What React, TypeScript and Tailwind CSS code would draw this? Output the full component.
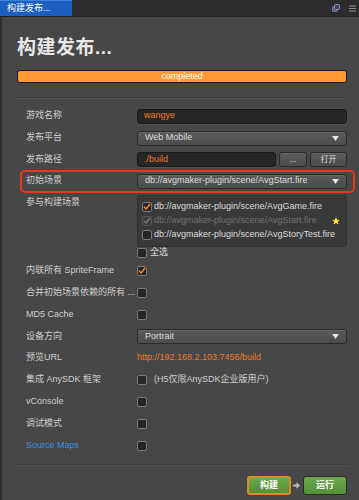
import React from "react";

const FONT = { fontFamily: '"Liberation Sans", "Noto Sans CJK SC", sans-serif' };

function Check({ checked = false, disabled = false }: { checked?: boolean; disabled?: boolean }) {
  return (
    <div
      className={
        "relative w-[10px] h-[10px] shrink-0 rounded-[2px] border " +
        (disabled ? "border-[#555] bg-[#3a3a3a]" : "border-[#7a7a7a] bg-[#262626]")
      }
    >
      {checked && (
        <svg viewBox="0 0 10 10" className="absolute left-[0px] top-[0px] w-[8px] h-[8px]">
          <path
            d="M1.5 5 L4 7.5 L8.5 1.5"
            fill="none"
            stroke={disabled ? "#777" : "#f08a24"}
            strokeWidth="1.8"
            strokeLinecap="round"
            strokeLinejoin="round"
          />
        </svg>
      )}
    </div>
  );
}

function Caret() {
  return (
    <svg viewBox="0 0 8 6" className="w-[7px] h-[5px]">
      <path d="M0 0 L8 0 L4 6 Z" fill="#e6e6e6" />
    </svg>
  );
}

function Select({ text }: { text: string }) {
  return (
    <div className="flex-1 h-[15px] flex items-center justify-between pl-[7px] pr-[7px] rounded-[3px] border border-[#2a2a2a] bg-gradient-to-b from-[#5a5a5a] to-[#4c4c4c] text-[9px] text-[#dcdcdc] shadow-[inset_0_1px_0_#666]">
      <span className="truncate">{text}</span>
      <Caret />
    </div>
  );
}

function Input({ text }: { text: string }) {
  return (
    <div className="flex-1 h-[15px] flex items-center pl-[6px] rounded-[3px] border border-[#1a1a1a] bg-[#262626] text-[9px] text-[#f07828] shadow-[0_1px_0_#555]">
      {text}
    </div>
  );
}

function Row({
  label,
  children,
  h = "h-[22px]",
  labelClass = "text-[#cfcfcf]",
}: {
  label: string;
  children?: React.ReactNode;
  h?: string;
  labelClass?: string;
}) {
  return (
    <div className={"flex items-center " + h}>
      <div className={"w-[111px] shrink-0 text-[9px] truncate pr-[2px] " + labelClass}>{label}</div>
      <div className="flex-1 flex items-center gap-[3px] min-w-0">{children}</div>
    </div>
  );
}

export default function App() {
  return (
    <div className="w-[359px] h-[500px] bg-[#474747] flex flex-col overflow-hidden" style={FONT}>
      {/* Tab bar */}
      <div className="h-[17px] shrink-0 bg-[#2c2c2c] flex items-stretch border-b border-[#222]">
        <div className="w-[72px] bg-[#1c5fc0] text-white text-[9px] flex items-center pl-[7px] border-t border-[#3f80d8]">
          构建发布...
        </div>
        <div className="flex-1" />
        <div className="flex items-center gap-[9px] pr-[3px]">
          <svg viewBox="0 0 8 8" className="w-[8px] h-[8px]">
            <rect x="0.5" y="2.5" width="5" height="5" rx="1" fill="#4a5a78" stroke="#8a96aa" strokeWidth="0.8" />
            <rect x="2.5" y="0.5" width="5" height="5" rx="1" fill="#394862" stroke="#9aa4b8" strokeWidth="0.8" />
          </svg>
          <svg viewBox="0 0 8 7" className="w-[7px] h-[7px]">
            <rect x="0" y="0" width="8" height="1.2" fill="#8a8a8a" />
            <rect x="0" y="2.9" width="8" height="1.2" fill="#8a8a8a" />
            <rect x="0" y="5.8" width="8" height="1.2" fill="#8a8a8a" />
          </svg>
        </div>
      </div>

      {/* Body */}
      <div className="flex-1 flex flex-col pl-[15px] pr-[12px] pt-[19px] border-l-2 border-[#2e2e2e]">
        <div className="h-[24px] leading-[24px] text-[19px] text-[#e8e8e8] font-bold tracking-[0.5px]">构建发布...</div>

        <div className="mt-[10px] h-[13px] rounded-[3px] border border-[#1c1c1c] bg-[#ff9933] flex items-center justify-center text-[9px] text-white">
          completed
        </div>

        <div className="mt-[14px] h-[2px] border-t border-[#3a3a3a] border-b border-b-[#545454]" />

        <div className="mt-[6px] pl-[9px] flex flex-col">
          <Row label="游戏名称">
            <Input text="wangye" />
          </Row>
          <Row label="发布平台">
            <Select text="Web Mobile" />
          </Row>
          <Row label="发布路径" h="h-[21px]">
            <Input text="./build" />
            <div className="w-[28px] h-[15px] rounded-[3px] border border-[#2a2a2a] bg-gradient-to-b from-[#5a5a5a] to-[#4c4c4c] flex items-center justify-center text-[9px] text-[#ddd] shadow-[inset_0_1px_0_#666]">
              ...
            </div>
            <div className="w-[37px] h-[15px] rounded-[3px] border border-[#2a2a2a] bg-gradient-to-b from-[#5a5a5a] to-[#4c4c4c] flex items-center justify-center text-[8px] text-[#ddd] shadow-[inset_0_1px_0_#666]">
              打开
            </div>
          </Row>
          <div className="relative">
            <div className="absolute left-[-6px] right-[-8px] top-0 bottom-[-1px] rounded-[5px] border-2 border-[#e8381a] pointer-events-none" />
            <Row label="初始场景">
              <Select text="db://avgmaker-plugin/scene/AvgStart.fire" />
            </Row>
          </div>

          {/* scene list */}
          <div className="flex items-start mt-[3px]">
            <div className="w-[111px] shrink-0 h-[14px] leading-[14px] text-[9px] text-[#cfcfcf]">参与构建场景</div>
            <div className="flex-1 h-[52px] rounded-[3px] border border-[#303030] bg-[#393939] pt-[4px] pl-[4px] pr-[6px] flex flex-col">
              <div className="h-[14px] flex items-center gap-[2px] text-[9px] text-[#dcdcdc]">
                <Check checked />
                <span>db://avgmaker-plugin/scene/AvgGame.fire</span>
              </div>
              <div className="h-[14px] flex items-center gap-[2px] text-[9px] text-[#707070]">
                <Check checked disabled />
                <span className="flex-1">db://avgmaker-plugin/scene/AvgStart.fire</span>
                <svg viewBox="0 0 10 10" className="w-[8px] h-[8px]">
                  <path d="M5 0.3 L6.4 3.4 L9.7 3.7 L7.2 5.9 L8 9.3 L5 7.5 L2 9.3 L2.8 5.9 L0.3 3.7 L3.6 3.4 Z" fill="#ffe21a" />
                </svg>
              </div>
              <div className="h-[14px] flex items-center gap-[2px] text-[9px] text-[#dcdcdc]">
                <Check />
                <span>db://avgmaker-plugin/scene/AvgStoryTest.fire</span>
              </div>
            </div>
          </div>

          <div className="flex items-center h-[11px]">
            <div className="w-[111px] shrink-0" />
            <Check />
            <span className="ml-[3px] text-[9px] text-[#dcdcdc]">全选</span>
          </div>

          <div className="mt-[2px]" />
          <Row label="内联所有 SpriteFrame">
            <Check checked />
          </Row>
          <Row label="合并初始场景依赖的所有 ...">
            <Check />
          </Row>
          <Row label="MD5 Cache">
            <Check />
          </Row>
          <Row label="设备方向" h="h-[21px]">
            <Select text="Portrait" />
          </Row>
          <Row label="预览URL">
            <span className="text-[9px] text-[#f07828]">http://192.168.2.103:7456/build</span>
          </Row>
          <Row label="集成 AnySDK 框架">
            <Check />
            <span className="ml-[4px] text-[9px] text-[#cfcfcf]">(H5仅限AnySDK企业版用户)</span>
          </Row>
          <Row label="vConsole">
            <Check />
          </Row>
          <Row label="调试模式">
            <Check />
          </Row>
          <Row label="Source Maps" h="h-[21px]" labelClass="text-[#3b8fe8]">
            <Check />
          </Row>
        </div>

        <div className="mt-[8px] h-[2px] border-t border-[#3a3a3a] border-b border-b-[#545454]" />

        <div className="mt-[10px] flex items-center justify-end">
          <div className="w-[44px] h-[19px] rounded-[3px] border-2 border-[#d98a2b] bg-gradient-to-b from-[#6aa84a] to-[#558f38] flex items-center justify-center text-[9px] font-bold text-white">
            构建
          </div>
          <svg viewBox="0 0 10 10" className="w-[9px] h-[9px] mx-[1px]">
            <path d="M1 4 L5 4 L5 1.5 L9 5 L5 8.5 L5 6 L1 6 Z" fill="#bdbdbd" />
          </svg>
          <div className="w-[44px] h-[19px] ml-[1px] rounded-[3px] border border-[#2a2a2a] bg-gradient-to-b from-[#6aa84a] to-[#558f38] flex items-center justify-center text-[9px] font-bold text-white">
            运行
          </div>
        </div>
      </div>
    </div>
  );
}
